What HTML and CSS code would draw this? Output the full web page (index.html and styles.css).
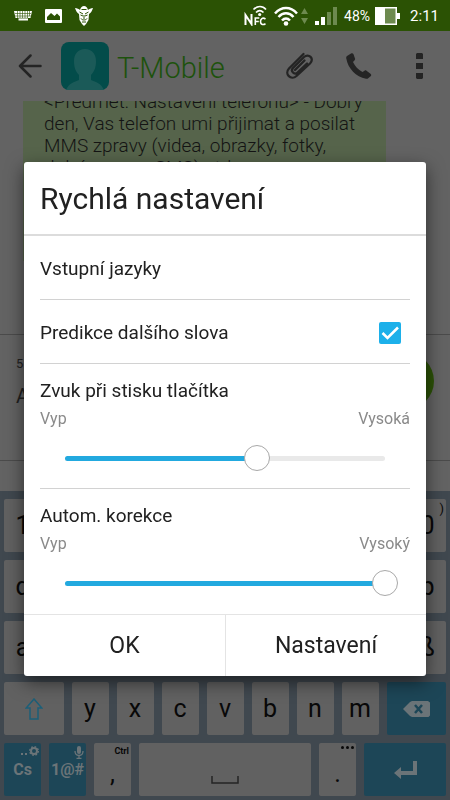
FILE: index.html
```html
<!DOCTYPE html>
<html lang="cs">
<head>
<meta charset="utf-8">
<meta name="viewport" content="width=device-width, initial-scale=1">
<title>Rychlá nastavení</title>
<link rel="stylesheet" href="styles.css">
</head>
<body>
<div class="app">
  <header class="status">
    <div class="status-left">
      <svg width="18" height="12" viewBox="0 0 18 12"><path fill="#fff" d="M0 1h18l-1.500 7H14v2.500H4.500V8H1.500z"/><path stroke="#2b5204" stroke-width=".6" d="M1 3.500h16M1 6h16M4 8.200h10M3.500 1v7M6 1v7M8.500 1v7M11 1v7M13.500 1v7M15.500 1v5"/></svg>
      <svg width="17" height="14" viewBox="0 0 17 14"><path fill="#fff" fill-rule="evenodd" d="M1 0h15a1 1 0 0 1 1 1v12a1 1 0 0 1-1 1H1a1 1 0 0 1-1-1V1a1 1 0 0 1 1-1zM2 11h13V7.500L12 4.500 9.500 7 6 4 2 8z"/></svg>
      <svg width="18" height="20" viewBox="0 0 18 20"><path fill="#fff" d="M0 2c2 0 4 1 5 2 1-3 2-4 4-4s3 1 4 4c1-1 3-2 5-2-1 3-2 5-4 6l-.5 6L11 18l-2 2-2-2-2.500-4L4 8C2 7 1 5 0 2z"/><path fill="none" stroke="#2b5204" d="M4.500 6l3.500 2M13.500 6L10 8M5.500 9l2.500 1M12.500 9L10 10M9 9v4M6 12.500c1 2 5 2 6 0M7 16h4M6.500 3.500h5"/></svg>
    </div>
    <div class="status-right">
      <svg class="nfc" width="23" height="21" viewBox="0 0 23 21"><g fill="none" stroke="#fff" stroke-width="2"><path d="M1.500 20V10l6 9V9"/><path stroke-width="1.600" d="M11.300 20v-7h4M11.300 16.500h3.500M21.500 14c-3-2-5 0-5 2.500s2 4 5 2.300"/><path stroke-width="1.700" d="M9.500 4.500c4-4 9-4 12.500 0M12 7.500c2.500-2.500 5-2.500 7.500 0"/></g><circle cx="15.700" cy="9.500" r="1.600" fill="#fff"/></svg>
      <svg width="24" height="20" viewBox="0 0 24 20"><g fill="none" stroke="#fff" stroke-width="2.500"><path d="M1 7.500c6.500-7.300 15.500-7.300 22 0M4.500 11c4.500-5 10.500-5 15 0M8 14.500c2.500-2.700 5.500-2.700 8 0"/></g><circle cx="12" cy="17.500" r="2.300" fill="#fff"/></svg>
      <svg width="7" height="16" viewBox="0 0 7 16"><path fill="#6d8a4f" d="M0 6l3.500-6L7 6zM0 10h7l-3.500 6z"/></svg>
      <svg class="signal" width="22" height="18" viewBox="0 0 22 18"><path fill="#fff" d="M0 14h4v4H0zM6 10h4v8H6z"/><path fill="#6d8a4f" d="M12 5h4v13h-4zM18 0h4v18h-4z"/></svg>
      <span class="percent">48%</span>
      <svg width="25" height="18" viewBox="0 0 25 18"><path fill="#fff" d="M0 0h22v6h3v6h-3v6H0z"/><path fill="#6d8a4f" d="M10 1.500h10.500v15H10z"/></svg>
      <span class="clock">2:11</span>
    </div>
  </header>

  <nav class="appbar">
    <button class="icon" aria-label="Zpět"><svg width="24" height="24" viewBox="0 0 24 24"><path fill="none" stroke="#242424" stroke-width="2.500" stroke-linecap="round" stroke-linejoin="round" d="M12.500 1.500L2 12l10.500 10.500M2 12h20.500"/></svg></button>
    <svg class="avatar" width="48" height="48" viewBox="0 0 48 48"><rect width="48" height="48" rx="8" fill="#034c4a"/><path fill="#1b5a58" d="M24 7c7 0 11 5 11 12 0 7-2 11-5 14v5c5 2 10 3 13 10H5c3-7 8-8 13-10v-5c-3-3-5-7-5-14C13 12 17 7 24 7z"/></svg>
    <h1 class="contact">T-Mobile</h1>
    <button class="icon" aria-label="Příloha"><svg width="28" height="28" viewBox="0 0 28 28"><path fill="none" stroke="#242424" stroke-width="2.300" stroke-linecap="round" d="M18.500 2L4 16.500c-5 5.500 2 12.500 7.500 7.500L25 11.500c5-5-1.500-10.500-6-6.500L8 16c-3 3 1.500 7.500 4.500 4.500L22 11.500M19.500 8.500L10 18"/></svg></button>
    <button class="icon" aria-label="Zavolat"><svg width="26" height="26" viewBox="0 0 26 26"><path fill="#242424" d="M1 3l4-2.500c1-.6 2-.3 2.400.6L9 5.500c.3.800 0 1.500-.6 2L7 9c2 4.500 5 7.500 9.500 10l2-1.300c.7-.5 1.400-.4 2 0l4 3c.8.700 1 1.400.4 2.200L22.500 25c-.7.700-1.500 1-2.500.8C10 24 2 15.500.3 5.500 0 4.500.2 3.600 1 3z"/></svg></button>
    <button class="icon" aria-label="Více"><svg width="8" height="26" viewBox="0 0 8 26"><path fill="#242424" d="M1 0h5l1 1v5H0V1zM0 10h7v6H0zM0 20h7v5l-1 1H1l-1-1z"/></svg></button>
  </nav>

  <main class="thread">
    <p class="bubble">&lt;Předmět: Nastavení telefonu&gt; - Dobrý<br>den, Vas telefon umi přijimat a posilat<br>MMS zpravy (videa, obrazky, fotky,<br>dolní mapy a SMS) atd</p>
    <div class="compose">
      <div class="draft"><span class="count">5</span><span class="entry">A</span></div>
      <span class="send"></span>
    </div>
  </main>

  <section class="keyboard" aria-label="Klávesnice">
    <button class="key">1</button><button class="key"></button><button class="key"></button><button class="key"></button><button class="key"></button><button class="key"></button><button class="key"></button><button class="key"></button><button class="key"></button><button class="key">0<span class="hint paren">)</span></button>
    <button class="key">q</button><button class="key"></button><button class="key"></button><button class="key"></button><button class="key"></button><button class="key"></button><button class="key"></button><button class="key"></button><button class="key"></button><button class="key">p</button>
    <button class="key">a</button><button class="key"></button><button class="key"></button><button class="key"></button><button class="key"></button><button class="key"></button><button class="key"></button><button class="key"></button><button class="key"></button><button class="key">ß</button>
    <button class="key wide" aria-label="Shift"><svg width="18" height="22" viewBox="0 0 18 22"><path fill="none" stroke="#1c5f78" stroke-width="1.500" d="M9 1l7.800 9H13v11H5V10H1.200z"/></svg></button>
    <button class="key">y</button><button class="key">x</button><button class="key">c</button><button class="key">v</button><button class="key">b</button><button class="key">n</button><button class="key">m</button>
    <button class="key wide blue" aria-label="Smazat"><svg width="27" height="16" viewBox="0 0 27 16"><path fill="#6b7478" d="M0 8l7-7 2-1h16l2 1.500v13L25.500 16H9l-2-1z"/><path stroke="#1d4657" stroke-width="2.500" d="M12 4l7 8M19 4l-7 8"/></svg></button>
    <button class="key blue label"><span>Cs</span><span class="hint"><svg width="18" height="10" viewBox="0 0 18 10"><path fill="#6b7478" d="M0 7h2v2H0zM4 7h2v2H4z"/><circle cx="13" cy="5" r="3" fill="none" stroke="#6b7478" stroke-width="2"/><circle cx="13" cy="5" r="4.300" fill="none" stroke="#6b7478" stroke-width="1.400" stroke-dasharray="1.700 1.677"/></svg></span></button>
    <button class="key blue label"><span>1@#</span><span class="hint"><svg width="10" height="13" viewBox="0 0 10 13"><rect x="3" y="0" width="4" height="8" rx="2" fill="#6b7478"/><path fill="none" stroke="#6b7478" stroke-width="1.300" d="M1 5c0 6 8 6 8 0M5 9.500V12M2.500 12.300h5"/></svg></span></button>
    <button class="key low">,<span class="hint">Ctrl</span></button>
    <button class="key space" aria-label="Mezerník"><svg width="28" height="8" viewBox="0 0 28 8"><path fill="none" stroke="#252525" stroke-width="1.500" d="M1 0v7h26V0"/></svg></button>
    <button class="key low">.<span class="hint"><svg width="13" height="3" viewBox="0 0 13 3"><g fill="#080808"><circle cx="1.500" cy="1.500" r="1.500"/><circle cx="6.500" cy="1.500" r="1.500"/><circle cx="11.500" cy="1.500" r="1.500"/></g></svg></span></button>
    <button class="key enter blue" aria-label="Enter"><svg width="23" height="18" viewBox="0 0 23 18"><path fill="#6b7478" d="M19 0h4v14H7v4l-7-6 7-6v4h12z"/></svg></button>
  </section>
</div>

<div class="layer">
  <form class="dialog" role="dialog" aria-labelledby="title">
    <h2 class="title" id="title">Rychlá nastavení</h2>
    <div class="body">
      <div class="row">Vstupní jazyky</div>
      <div class="row">
        <label for="predict">Predikce dalšího slova</label>
        <span class="check"><input type="checkbox" id="predict" checked><svg width="22" height="22" viewBox="0 0 22 22"><path fill="none" stroke="#fff" stroke-width="2.500" d="M3.500 11l5 5L19 5.500"/></svg></span>
      </div>
      <div class="group">
        <label for="sound">Zvuk při stisku tlačítka</label>
        <div class="ends"><span>Vyp</span><span>Vysoká</span></div>
        <div class="slider"><span class="track"><span class="fill" style="width:60%"></span></span><input type="range" id="sound" min="0" max="100" value="60"></div>
      </div>
      <div class="group">
        <label for="correct">Autom. korekce</label>
        <div class="ends"><span>Vyp</span><span>Vysoký</span></div>
        <div class="slider"><span class="track"><span class="fill" style="width:100%"></span></span><input type="range" id="correct" min="0" max="100" value="100"></div>
      </div>
    </div>
    <div class="actions"><button type="button">OK</button><button type="button">Nastavení</button></div>
  </form>
</div>
</body>
</html>
```
FILE: styles.css
```css
* { box-sizing: border-box; }
body {
  margin: 0;
  background: #636363;
  font-family: Roboto, "Noto Sans", sans-serif;
  color: #212121;
}
svg { display: block; flex: none; }
button, input { font: inherit; color: inherit; margin: 0; }
button { border: 0; padding: 0; background: none; }

.app { display: flex; flex-direction: column; height: 100vh; }

.status {
  display: flex;
  justify-content: space-between;
  height: 31px;
  padding: 0 11px 0 14px;
  background: #2b5204;
  color: #fff;
}
.status-left, .status-right { display: flex; align-items: center; }
.status-left { gap: 13px; }
.status-right { gap: 3px; }
.nfc { margin-right: 4px; }
.signal { margin: 0 4px; }
.percent { margin-right: 2px; font-size: 14px; }
.clock { margin-left: 7px; font-size: 15px; }

.appbar {
  display: flex;
  align-items: center;
  height: 70px;
  padding: 0 26px 0 18px;
}
.avatar { margin: 0 8px 0 19px; }
.contact {
  flex: 1;
  margin: 0;
  padding-top: 3px;
  font-size: 29px;
  font-weight: 300;
  color: #1d520c;
}
.icon + .icon { margin-left: 33px; }
.icon:last-child { margin-left: 44px; }

.thread {
  flex: 1;
  display: flex;
  flex-direction: column;
  min-height: 0;
  overflow: hidden;
}
.bubble {
  flex: 1;
  margin: 0 64px 0 23px;
  padding: 0 0 0 21px;
  background: #56644b;
  font-size: 19px;
  font-weight: 300;
  line-height: 22px;
  white-space: nowrap;
  color: #141414;
  max-height: 160px;
  overflow: hidden;
}
.bubble::before { content: ""; display: block; margin-top: -10px; }
.compose {
  display: flex;
  justify-content: space-between;
  align-items: center;
  height: 127px;
  margin: auto 0 30px;
  padding: 0 16px 34px;
  border: solid #4b4b4b;
  border-width: 1px 0;
}
.draft { display: flex; flex-direction: column; gap: 10px; }
.count { font-size: 13px; line-height: 20px; }
.entry { font-size: 20px; line-height: 24px; }
.send { width: 58px; height: 58px; border-radius: 50%; background: #2c5207; }

.keyboard {
  display: grid;
  grid-template-columns: repeat(20, 1fr);
  grid-auto-rows: 53px;
  gap: 8px;
  padding: 8px 4px 4px;
  background: #40484f;
}
.key {
  position: relative;
  grid-column: span 2;
  display: flex;
  align-items: center;
  justify-content: center;
  border-radius: 2px;
  background: #616161;
  font-size: 25px;
  color: #080808;
}
.wide { grid-column: span 3; }
.space { grid-column: span 8; align-items: flex-end; padding-bottom: 12px; }
.enter { grid-column: span 4; }
.low { align-items: flex-end; padding-bottom: 8px; }
.blue { background: #1d4657; color: #6b7478; }
.label { font-size: 16px; font-weight: 700; }
.hint {
  position: absolute;
  top: 3px;
  right: 2px;
  font-size: 9px;
  line-height: 10px;
  font-weight: 700;
}
.paren { font-size: 13px; font-weight: 400; line-height: 14px; }

.layer {
  position: fixed;
  inset: 0;
  display: flex;
  align-items: center;
  justify-content: center;
  padding: 38px 24px 0;
}
.dialog {
  width: 100%;
  background: #fff;
  border-radius: 3px;
  box-shadow: 0 6px 18px rgba(0, 0, 0, .55);
}
.title {
  margin: 0;
  padding: 2px 16px 0;
  font-size: 30px;
  line-height: 70px;
  font-weight: 400;
  border-bottom: 2px solid #dcdcdc;
}
.body { padding: 0 16px; font-size: 19px; }
.row {
  display: flex;
  align-items: center;
  justify-content: space-between;
  height: 64px;
  padding-top: 2px;
  border-bottom: 1px solid #d2d2d2;
}
.group {
  height: 125px;
  padding-top: 15px;
  border-bottom: 1px solid #d2d2d2;
}
.group:last-child { border-bottom: 0; }
.group label { display: block; line-height: 24px; }
.ends {
  display: flex;
  justify-content: space-between;
  margin-top: 4px;
  font-size: 16px;
  line-height: 24px;
  color: #8a8a8a;
}
.check { display: grid; margin-right: 9px; }
.check > * { grid-area: 1 / 1; }
.check svg { pointer-events: none; z-index: 1; }
.check input {
  appearance: none;
  width: 22px;
  height: 22px;
  border-radius: 2px;
  background: #1cb0ea;
}
.slider { display: grid; align-items: center; margin: 14px 12px 0; }
.slider > * { grid-area: 1 / 1; }
.track { height: 5px; margin: 0 13px; border-radius: 3px; background: #e9e9e9; }
.fill { display: block; height: 100%; border-radius: 3px; background: #22a9df; }
.slider input { appearance: none; width: 100%; height: 26px; background: none; }
.slider input::-webkit-slider-thumb {
  appearance: none;
  width: 26px;
  height: 26px;
  border: 1px solid #a8a8a8;
  border-radius: 50%;
  background: #fff;
}
.actions {
  display: grid;
  grid-template-columns: 1fr 1fr;
  height: 62px;
  border-top: 1px solid #e4e4e4;
  font-size: 23px;
}
.actions button + button { border-left: 1px solid #e4e4e4; }
```
